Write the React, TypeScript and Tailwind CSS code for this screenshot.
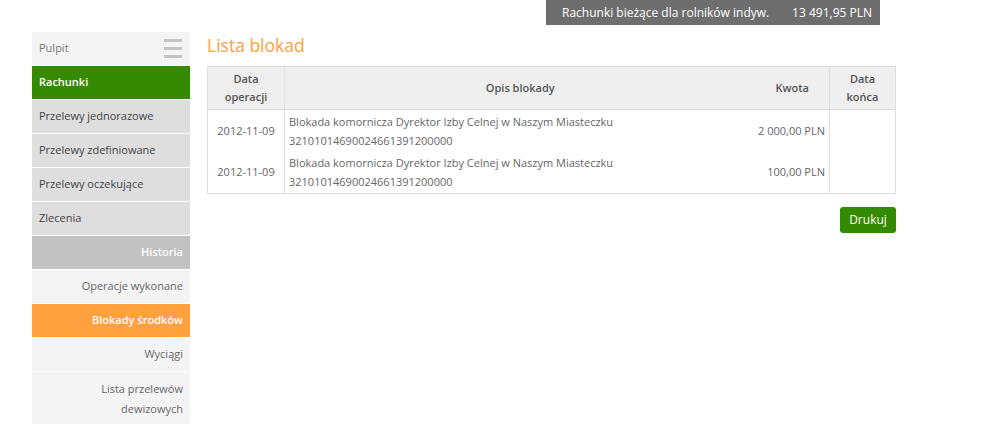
import React from "react";

const font = { fontFamily: '"Open Sans", "Noto Sans", sans-serif' };

function NavItem({
  label,
  variant,
}: {
  label: React.ReactNode;
  variant: "top" | "main" | "active" | "section" | "sub" | "subActive";
}) {
  const base = "flex items-center px-[7px] border-b border-white text-[11px]";
  const styles: Record<string, string> = {
    top: "bg-[#f4f4f4] text-[#777] h-[34px]",
    main: "bg-[#dedede] text-[#444] h-[34px]",
    active: "bg-[#348a00] text-white font-semibold h-[34px]",
    section: "bg-[#c2c2c2] text-white font-semibold justify-end h-[34px]",
    sub: "bg-[#f4f4f4] text-[#666] justify-end text-right h-[34px]",
    subActive: "bg-[#ffa13f] text-white font-semibold justify-end h-[34px]",
  };
  return <div className={`${base} ${styles[variant]}`}>{label}</div>;
}

export default function App() {
  return (
    <div className="w-[1005px] h-[424px] bg-white overflow-hidden" style={font}>
      <div className="flex justify-end pr-[125px]">
        <div className="w-[334px] h-[25px] bg-[#6e6e6e] text-white text-[12px] flex items-center justify-between pl-[16px] pr-[8px]">
          <span>Rachunki bieżące dla rolników indyw.</span>
          <span>13 491,95 PLN</span>
        </div>
      </div>
      <div className="flex pl-[32px] pt-[7px]">
        <div className="w-[158px] flex flex-col">
          <div className="flex items-center justify-between bg-[#f4f4f4] text-[#777] h-[34px] border-b border-white px-[7px] text-[11px]">
            <span>Pulpit</span>
            <div className="flex flex-col gap-[5px] mr-[1px]">
              <div className="w-[18px] h-[3px] bg-[#c4c4c4]" />
              <div className="w-[18px] h-[3px] bg-[#c4c4c4]" />
              <div className="w-[18px] h-[3px] bg-[#c4c4c4]" />
            </div>
          </div>
          <NavItem label="Rachunki" variant="active" />
          <NavItem label="Przelewy jednorazowe" variant="main" />
          <NavItem label="Przelewy zdefiniowane" variant="main" />
          <NavItem label="Przelewy oczekujące" variant="main" />
          <NavItem label="Zlecenia" variant="main" />
          <NavItem label="Historia" variant="section" />
          <NavItem label="Operacje wykonane" variant="sub" />
          <NavItem label="Blokady środków" variant="subActive" />
          <NavItem label="Wyciągi" variant="sub" />
          <div className="bg-[#f4f4f4] text-[#666] text-[11px] text-right px-[7px] pt-[7px] pb-[6px] leading-[20px] border-b border-[#e4e4e4]">
            Lista przelewów
            <br />
            dewizowych
          </div>
        </div>
        <div className="ml-[17px] w-[689px]">
          <h1 className="text-[#ffa03c] text-[17.5px] leading-[24px] mt-[1px] mb-[9px]">Lista blokad</h1>
          <table className="w-full border-collapse text-[11px]">
            <thead>
              <tr className="bg-[#eeeeee] text-[#555] h-[43px]">
                <th className="border border-[#dddddd] w-[77px] font-semibold leading-[18px] text-center">
                  Data
                  <br />
                  operacji
                </th>
                <th className="border-y border-l border-[#dddddd] font-semibold text-center">Opis blokady</th>
                <th className="border-y border-r border-[#dddddd] w-[74px] font-semibold text-center">Kwota</th>
                <th className="border border-[#dddddd] w-[66px] font-semibold leading-[18px] text-center">
                  Data
                  <br />
                  końca
                </th>
              </tr>
            </thead>
            <tbody className="text-[#666]">
              {["2 000,00 PLN", "100,00 PLN"].map((amt, i) => (
                <tr key={i} className="h-[42px]">
                  <td className={`border-l border-r border-[#dddddd] text-center ${i === 1 ? "border-b" : ""}`}>2012-11-09</td>
                  <td className={`border-[#dddddd] pl-[4px] leading-[19px] align-middle ${i === 1 ? "border-b" : ""}`}>
                    Blokada komornicza Dyrektor Izby Celnej w Naszym Miasteczku
                    <br />
                    32101014690024661391200000
                  </td>
                  <td className={`border-r border-[#dddddd] text-right pr-[4px] whitespace-nowrap ${i === 1 ? "border-b" : ""}`}>{amt}</td>
                  <td className={`border-r border-[#dddddd] ${i === 1 ? "border-b" : ""}`}></td>
                </tr>
              ))}
            </tbody>
          </table>
          <div className="flex justify-end mt-[13px]">
            <button className="bg-[#348a00] text-white text-[12px] h-[26px] w-[56px] rounded-[3px]">Drukuj</button>
          </div>
        </div>
      </div>
    </div>
  );
}
